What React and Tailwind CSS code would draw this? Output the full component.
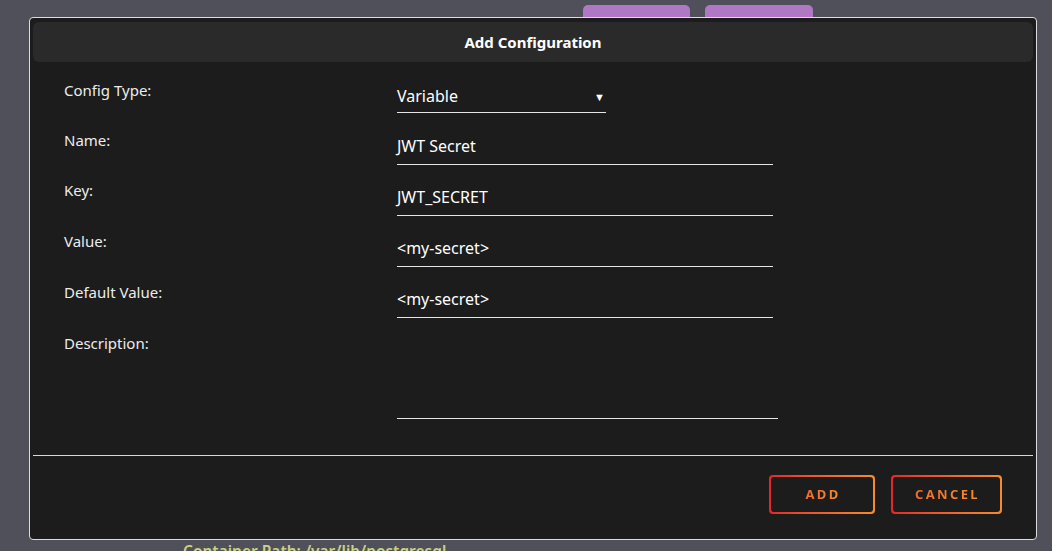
import React from "react";

const FIELDS = [
  { label: "Name:", value: "JWT Secret", row: "h-[50px]", gap: "mt-[6px]" },
  { label: "Key:", value: "JWT_SECRET", row: "h-[51px]", gap: "mt-[7px]" },
  { label: "Value:", value: "<my-secret>", row: "h-[51px]", gap: "mt-[7px]" },
  { label: "Default Value:", value: "<my-secret>", row: "h-[51px]", gap: "mt-[7px]" },
];

function GradientButton({ children, width }) {
  return (
    <button className={`rounded-[4px] bg-gradient-to-r from-[#e2262b] to-[#f88b2b] p-[2px] ${width}`}>
      <span className="flex h-[35px] items-center justify-center rounded-[3px] bg-[#1c1c1c]">
        <span className="bg-gradient-to-r from-[#f26a2a] to-[#f88c2b] bg-clip-text pl-[2px] text-[13px] font-bold tracking-[0.18em] text-transparent">
          {children}
        </span>
      </span>
    </button>
  );
}

export default function App() {
  return (
    <div className="relative h-[551px] w-[1052px] overflow-hidden bg-[#50505a] font-['Noto_Sans',sans-serif]">
      {/* page behind the dialog */}
      <div className="flex gap-[15px] pl-[583px] pt-[5px]">
        <div className="h-[20px] w-[107px] rounded-t-[5px] bg-[#b077c4]" />
        <div className="h-[20px] w-[108px] rounded-t-[5px] bg-[#b077c4]" />
      </div>
      <div className="mt-[516px] pl-[183px] text-[15.5px] font-semibold leading-[20px] text-[#c9d27e]">
        Container Path: /var/lib/postgresql
      </div>

      {/* dialog */}
      <div className="absolute left-[29px] top-[17px] flex h-[523px] w-[1008px] flex-col rounded-[4px] border border-[#dcdcdc] bg-[#1c1c1c] px-[3px] pt-[4px]">
        <div className="flex h-[40px] items-center justify-center rounded-[6px] bg-[#2a2a2a] text-[15px] font-bold text-white">
          Add Configuration
        </div>

        <div className="flex flex-col pl-[31px] pt-[18px] text-[15px] leading-[20px] text-[#ececec]">
          <div className="flex h-[50px]">
            <div className="w-[333px]">Config Type:</div>
            <div className="mt-[6px] flex h-[27px] w-[209px] items-start justify-between border-b border-[#e6e6e6] text-white">
              <span className="text-[16px]">Variable</span>
              <span className="mr-[1px] mt-[1px] text-[11px]">▼</span>
            </div>
          </div>

          {FIELDS.map((f) => (
            <div key={f.label} className={`flex ${f.row}`}>
              <div className="w-[333px]">{f.label}</div>
              <div className={`${f.gap} h-[29px] w-[376px] border-b border-[#e6e6e6] text-[16px] text-white`}>
                {f.value}
              </div>
            </div>
          ))}

          <div className="flex">
            <div className="w-[333px]">Description:</div>
            <div className="mt-[6px] h-[80px] w-[381px] border-b border-[#e6e6e6]" />
          </div>
        </div>

        <div className="mt-[36px] border-t border-[#d8d8d8]" />

        <div className="flex justify-end gap-[16px] pr-[31px] pt-[19px]">
          <GradientButton width="w-[106px]">ADD</GradientButton>
          <GradientButton width="w-[111px]">CANCEL</GradientButton>
        </div>
      </div>
    </div>
  );
}
